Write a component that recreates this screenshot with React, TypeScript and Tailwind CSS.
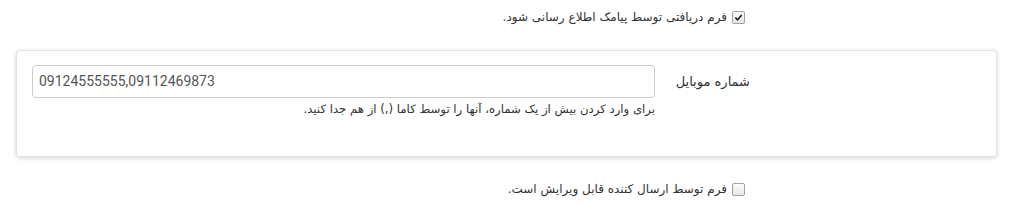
import React from "react";

function Check({ checked, label }: { checked?: boolean; label: string }) {
  return (
    <label className="flex items-center gap-[5px] text-[12px] text-[#333]">
      <span className="relative flex h-[13px] w-[13px] items-center justify-center rounded-[2px] border border-[#a0a0a0] bg-gradient-to-b from-[#fcfcfc] to-[#e6e6e6]">
        {checked && (
          <svg viewBox="0 0 10 10" className="h-[9px] w-[9px]">
            <path d="M1.5 5.2 L4 7.6 L8.6 2.2" fill="none" stroke="#222" strokeWidth="1.9" />
          </svg>
        )}
      </span>
      <span>{label}</span>
    </label>
  );
}

export default function App() {
  return (
    <div dir="rtl" className="h-[218px] w-[1009px] bg-white font-['DejaVu_Sans',sans-serif]">
      <div className="pr-[264px] pt-[8px]">
        <Check checked label="فرم دریافتی توسط پیامک اطلاع رسانی شود." />
      </div>

      <div className="ml-[16px] mr-[12px] mt-[24px] h-[107px] rounded-[4px] border border-[#e3e3e3] bg-white pl-[15px] pr-[246px] pt-[14px] shadow-[0_1px_4px_rgba(0,0,0,0.18)]">
        <div className="flex">
          <div className="w-[95px] pt-[7px] text-[13px] text-[#333]">شماره موبایل</div>
          <div className="flex-1">
            <div
              dir="ltr"
              className="flex h-[33px] items-center rounded-[4px] border border-[#ccc] px-[6px] font-['Roboto',sans-serif] text-[14px] text-[#555]"
            >
              09124555555,09112469873
            </div>
            <div className="mt-[3px] text-[11.7px] text-[#333]">
              برای وارد کردن بیش از یک شماره، آنها را توسط کاما (,) از هم جدا کنید.
            </div>
          </div>
        </div>
      </div>

      <div className="pr-[264px] pt-[23px]">
        <Check label="فرم توسط ارسال کننده قابل ویرایش است." />
      </div>
    </div>
  );
}
